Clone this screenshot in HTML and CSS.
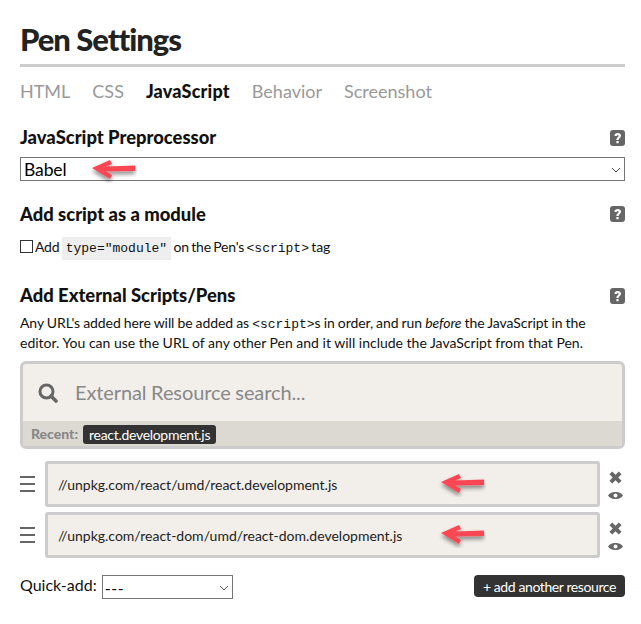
FILE: index.html
```html
<!DOCTYPE html>
<html>
<head>
    <meta charset="utf-8"/>
    <title>Pen Settings</title>
    <link rel="stylesheet" href="styles.css">
</head>
<body>
<svg class="defs" width="0" height="0">
    <defs>
        <filter id="arrow-shadow" x="-20%" y="-40%" width="140%" height="200%">
            <feDropShadow dx="0" dy="3" stdDeviation="2" flood-color="#000" flood-opacity="0.45"/>
        </filter>
        <symbol id="arrow" viewBox="0 0 48 26">
            <path d="M3 11 L21 3 L23 7 L17 9.5 L46 8.5 L46 14 L17 14.5 L23 18 L21 22 Z" fill="#fb4652" filter="url(#arrow-shadow)"/>
        </symbol>
        <symbol id="help" viewBox="0 0 15 16">
            <rect width="15" height="16" rx="3" fill="#666"/>
            <path d="M4.4 6 C4.4 2.2 11 2.2 11 5.8 C11 8 8.6 8 8.6 10 H6.4 C6.4 7.2 8.6 7.2 8.6 5.9 C8.6 4.7 6.8 4.8 6.7 6 Z M6.4 11 H8.6 V13.2 H6.4 Z" fill="#fff"/>
        </symbol>
        <symbol id="close" viewBox="0 0 14 14">
            <path d="M3.5 0.5 L7 4 L10.5 0.5 L13.5 3.5 L10 7 L13.5 10.5 L10.5 13.5 L7 10 L3.5 13.5 L0.5 10.5 L4 7 L0.5 3.5 Z" fill="#666"/>
        </symbol>
        <symbol id="eye" viewBox="0 0 15 7" preserveAspectRatio="none">
            <path fill-rule="evenodd" d="M0 3.5 C3 -1.2 12 -1.2 15 3.5 C12 8.2 3 8.2 0 3.5 Z M7.5 1.5 A2 2 0 1 0 7.5 5.5 A2 2 0 1 0 7.5 1.5 Z" fill="#666"/>
        </symbol>
        <symbol id="chevron" viewBox="0 0 10 6">
            <path d="M1 1 L5 5 L9 1" fill="none" stroke="#555" stroke-width="1"/>
        </symbol>
    </defs>
</svg>
<div class="content">
    <h1>Pen Settings</h1>
    <nav class="tabs">
        <a>HTML</a>
        <a>CSS</a>
        <a class="active">JavaScript</a>
        <a>Behavior</a>
        <a>Screenshot</a>
    </nav>

    <section class="preprocessor">
        <div class="title-row">
            <h2>JavaScript Preprocessor</h2>
            <svg class="help"><use href="#help"/></svg>
        </div>
        <div class="select-wrap">
            <select class="select-main">
                <option>Babel</option>
            </select>
            <svg class="chevron"><use href="#chevron"/></svg>
            <svg class="arrow arrow-babel"><use href="#arrow"/></svg>
        </div>
    </section>

    <section class="module">
        <div class="title-row">
            <h2>Add script as a module</h2>
            <svg class="help"><use href="#help"/></svg>
        </div>
        <label class="module-line">
            <input type="checkbox"> Add <code class="chip">type="module"</code> on the Pen's <code>&lt;script&gt;</code> tag
        </label>
    </section>

    <section class="external">
        <div class="title-row">
            <h2>Add External Scripts/Pens</h2>
            <svg class="help"><use href="#help"/></svg>
        </div>
        <p class="intro"><span class="tight">Any URL's added here will be added as <code>&lt;script&gt;</code>s in order, and run <em>before</em> the JavaScript in the</span> editor. You can use the URL of any other Pen and it will include the JavaScript from that Pen.</p>

        <div class="search-box">
            <div class="search-field">
                <svg class="search-icon" viewBox="0 0 20 20">
                    <circle cx="8.5" cy="8.5" r="6.5" fill="none" stroke="#666" stroke-width="3"/>
                    <path d="M13 13 L18 18" stroke="#666" stroke-width="3.6" stroke-linecap="round"/>
                </svg>
                <span class="search-placeholder">External Resource search...</span>
            </div>
            <div class="recent">
                <b>Recent:</b>
                <span class="tag">react.development.js</span>
            </div>
        </div>

        <div class="resource">
            <span class="handle"><i></i><i></i><i></i></span>
            <div class="resource-url">
                //unpkg.com/react/umd/react.development.js
                <svg class="arrow arrow-row"><use href="#arrow"/></svg>
            </div>
            <div class="resource-actions">
                <svg class="close"><use href="#close"/></svg>
                <svg class="eye"><use href="#eye"/></svg>
            </div>
        </div>
        <div class="resource">
            <span class="handle"><i></i><i></i><i></i></span>
            <div class="resource-url">
                //unpkg.com/react-dom/umd/react-dom.development.js
                <svg class="arrow arrow-row"><use href="#arrow"/></svg>
            </div>
            <div class="resource-actions">
                <svg class="close"><use href="#close"/></svg>
                <svg class="eye"><use href="#eye"/></svg>
            </div>
        </div>

        <div class="bottom-row">
            <label class="quick-add">Quick-add:
                <span class="select-wrap-inline">
                    <select class="select-quick">
                        <option>---</option>
                    </select>
                    <svg class="chevron"><use href="#chevron"/></svg>
                </span>
            </label>
            <button class="add-btn">+ add another resource</button>
        </div>
    </section>
</div>
</body>
</html>
```

FILE: styles.css
```css
body {
    margin: 0;
    color: #111;
    font: 14px/20px Lato, sans-serif;
    background: #fff;
}

h1, h2, p {
    margin: 0;
}

.defs {
    position: absolute;
}

.content {
    padding: 0 16px 0 20px;
}

h1 {
    font-size: 31px;
    line-height: 38px;
    font-weight: 900;
    letter-spacing: -1px;
    color: #222;
    padding-top: 20px;
    padding-bottom: 6px;
    border-bottom: 3px solid #ccc;
}

.tabs {
    display: flex;
    gap: 22px;
    margin-top: 11px;
    font-size: 18px;
    line-height: 26px;
    color: #999;
}

.tabs .active {
    color: #111;
    font-weight: 900;
    letter-spacing: 0.2px;
}

.title-row {
    display: flex;
    justify-content: space-between;
    align-items: center;
}

h2 {
    font-size: 18.4px;
    line-height: 24px;
    font-weight: 900;
}

.help {
    width: 15px;
    height: 16px;
}

.preprocessor {
    margin-top: 21px;
}

.preprocessor .help,
.external .help {
    margin-top: 1px;
}

.select-wrap {
    position: relative;
    margin-top: 8px;
}

.select-main {
    display: block;
    width: 100%;
    height: 24px;
    appearance: none;
    font: 17.5px Lato, sans-serif;
    letter-spacing: -0.1px;
    color: #000;
    background: #fff;
    border: 1px solid #767676;
    border-radius: 0;
    padding: 0 0 0 3px;
}

.chevron {
    position: absolute;
    right: 4px;
    top: 10px;
    width: 10px;
    height: 6px;
    pointer-events: none;
}

.arrow {
    position: absolute;
    width: 48px;
    height: 26px;
}

.arrow-babel {
    left: 69px;
    top: 0;
}

.module {
    margin-top: 21px;
}

.module-line {
    display: block;
    margin-top: 9px;
    line-height: 24px;
    letter-spacing: -0.2px;
    word-spacing: -1px;
}

.module-line input {
    appearance: none;
    width: 13px;
    height: 13px;
    margin: 0;
    border: 1px solid #333;
    background: #fff;
    vertical-align: -1px;
}

code {
    font: 13px "Liberation Mono", monospace;
    letter-spacing: 0;
}

.chip {
    background: #eee;
    padding: 4px 4px;
}

.external {
    margin-top: 24px;
}

.intro {
    margin-top: 6px;
}

.tight {
    letter-spacing: -0.08px;
    word-spacing: -0.4px;
}

.search-box {
    margin-top: 8px;
    border: 3px solid #ccc;
    border-radius: 6px;
    background: #f2efeb;
}

.search-field {
    display: flex;
    align-items: center;
    height: 57px;
    padding-left: 15px;
}

.search-icon {
    width: 20px;
    height: 20px;
}

.search-placeholder {
    margin-left: 17px;
    margin-bottom: 2px;
    font-size: 20px;
    letter-spacing: -0.1px;
    word-spacing: -0.4px;
    color: #888;
}

.recent {
    display: flex;
    align-items: center;
    gap: 5px;
    height: 25px;
    padding-left: 8px;
    padding-top: 1px;
    box-sizing: border-box;
    background: #dcd9d3;
    color: #888;
}

.recent b {
    font-weight: 900;
}

.tag {
    background: #333;
    color: #fff;
    border-radius: 3px;
    padding: 0 6px;
    line-height: 19px;
    letter-spacing: -0.3px;
}

.resource {
    display: flex;
    align-items: center;
    margin-top: 5px;
}

.search-box + .resource {
    margin-top: 12px;
}

.handle {
    flex: none;
    width: 15px;
    margin-right: 10px;
    display: flex;
    flex-direction: column;
    gap: 5px;
}

.handle i {
    display: block;
    height: 2px;
    background: #666;
}

.resource-url {
    position: relative;
    flex: 1;
    height: 40px;
    line-height: 41px;
    padding-left: 10px;
    border: 3px solid #ccc;
    border-radius: 3px;
    background: #f2efeb;
    color: #222;
}

.arrow-row {
    left: 390px;
    top: 7px;
}

.resource-actions {
    flex: none;
    width: 25px;
    box-sizing: border-box;
    display: flex;
    flex-direction: column;
    align-items: flex-end;
    padding-right: 2px;
    padding-top: 1px;
    gap: 8px;
}

.close {
    width: 13px;
    height: 13px;
    margin-right: 1px;
}

.eye {
    width: 15px;
    height: 7px;
}

.bottom-row {
    display: flex;
    justify-content: space-between;
    align-items: flex-start;
    margin-top: 17px;
}

.quick-add {
    font-size: 16px;
    word-spacing: 1px;
}

.select-wrap-inline {
    position: relative;
    display: inline-block;
    vertical-align: top;
}

.select-quick {
    display: block;
    width: 131px;
    height: 24px;
    appearance: none;
    font: 16px Lato, sans-serif;
    letter-spacing: 0.5px;
    background: #fff;
    border: 1px solid #767676;
    border-radius: 0;
    padding: 0 0 0 2px;
}

.add-btn {
    border: 0;
    border-radius: 4px;
    background: #333;
    color: #fff;
    font: 14px Lato, sans-serif;
    letter-spacing: -0.4px;
    height: 22px;
    padding: 0 9px;
}
```
